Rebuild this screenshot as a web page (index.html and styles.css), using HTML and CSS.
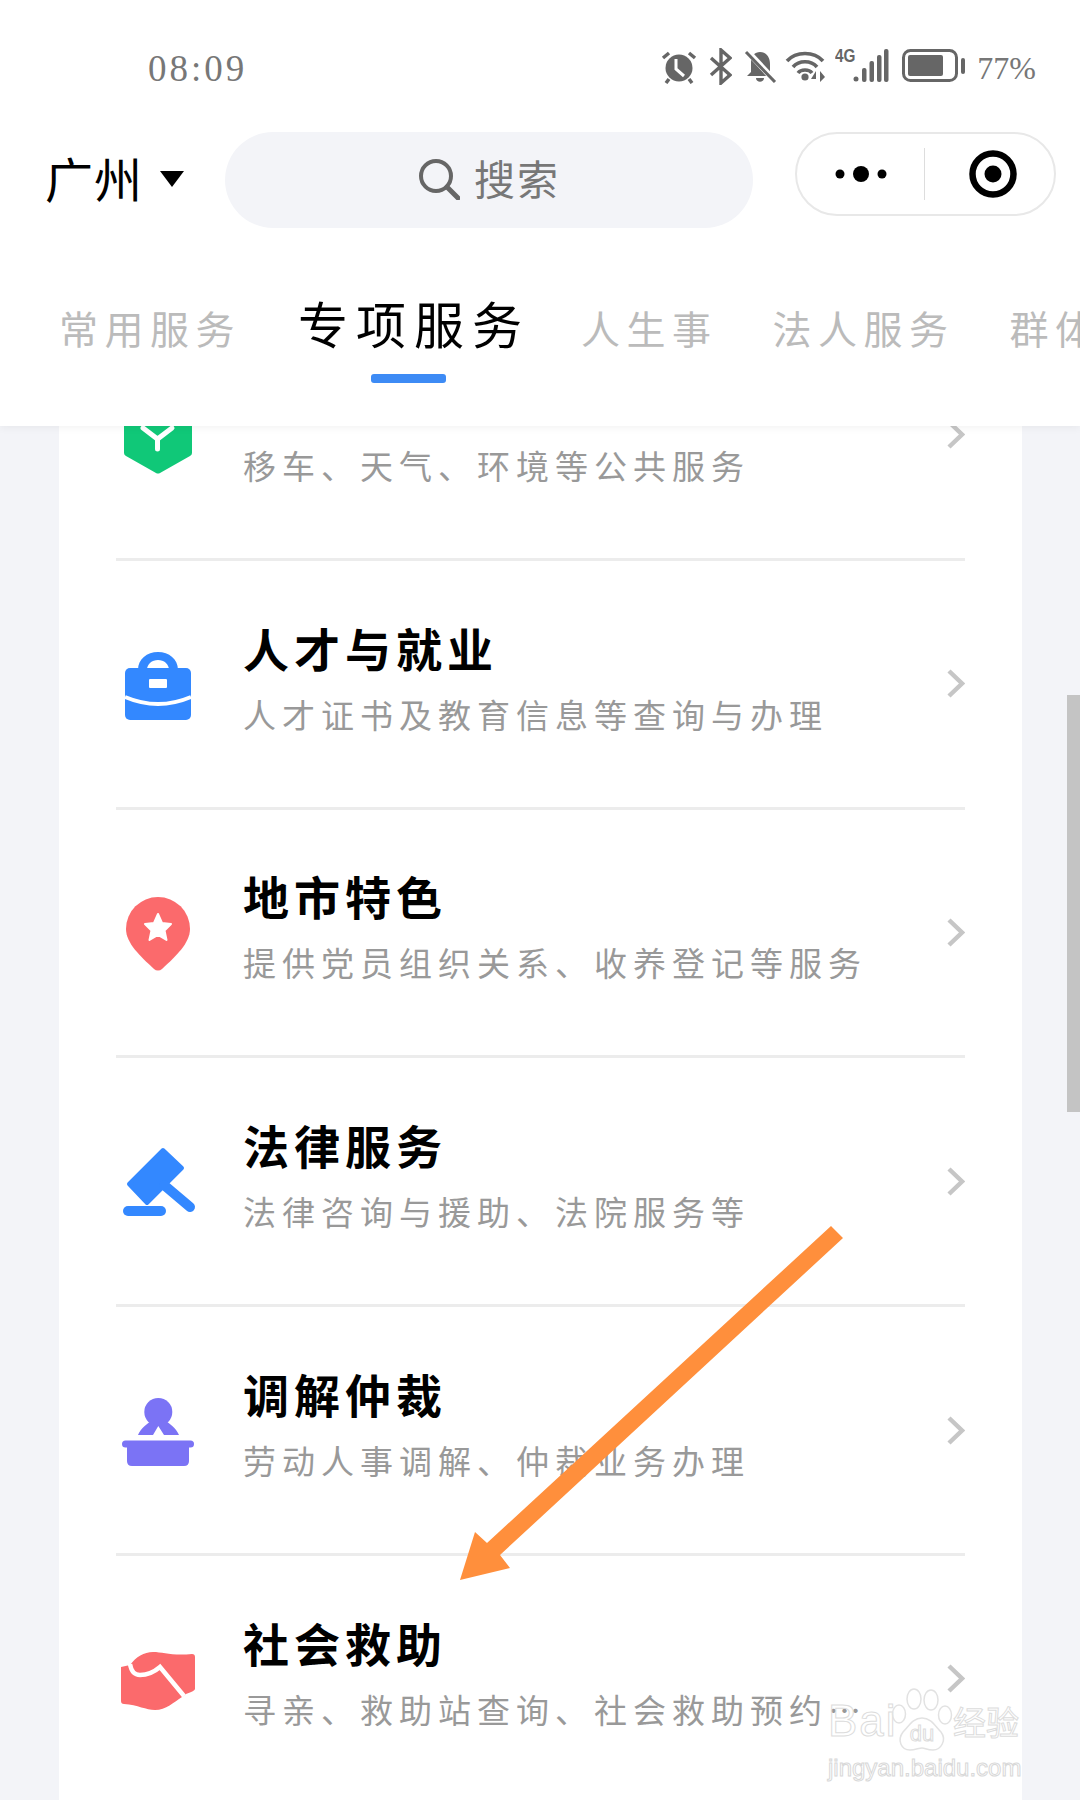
FILE: index.html
```html
<!DOCTYPE html>
<html lang="zh-CN">
<head>
    <meta charset="UTF-8">
    <meta name="viewport" content="width=device-width, initial-scale=1.0">
    <title>专项服务</title>
    <link rel="stylesheet" href="styles.css">
</head>
<body>
    <div class="page">
        <header class="header">
            <div class="status-bar">
                <span class="time">08:09</span>
                <div class="status-icons">
                    <svg class="st-alarm" width="36" height="34" viewBox="0 0 36 34">
                        <circle cx="18" cy="18" r="13.5" fill="#666"/>
                        <path d="M2 8L8 3M34 8L28 3M8 29L5 33M28 29L31 33" stroke="#666" stroke-width="3.5" fill="none"/>
                        <path d="M15 9V19L23 26" stroke="#fff" stroke-width="3" fill="none"/>
                    </svg>
                    <svg class="st-bt" width="23" height="37" viewBox="0 0 23 37">
                        <path d="M2 10L21 27L12 35V2L21 10L2 27" stroke="#666" stroke-width="3.4" fill="none"/>
                    </svg>
                    <svg class="st-bell" width="33" height="34" viewBox="0 0 33 34">
                        <path d="M16 3C23 3 26 9 26 15V23L29 27H3L7 23V13C7 7 11 3 16 3Z" fill="#666"/>
                        <path d="M12 29H20C20 34 12 34 12 29Z" fill="#666"/>
                        <path d="M3 2L31 32" stroke="#fff" stroke-width="6"/>
                        <path d="M2 3L31 33" stroke="#666" stroke-width="3"/>
                    </svg>
                    <svg class="st-wifi" width="40" height="34" viewBox="0 0 40 34">
                        <path d="M2 12C11 2 29 2 38 12M8 18C14 11 26 11 32 18M13 24C16 20 24 20 27 24" stroke="#666" stroke-width="3.6" fill="none"/>
                        <circle cx="20" cy="28" r="3.6" fill="#666"/>
                        <path d="M31 33V22L26 30H31M35 22V33L40 28Z" fill="#666"/>
                    </svg>
                    <div class="st-net">
                        <span class="net-label">4G</span>
                        <svg width="36" height="33" viewBox="0 0 36 33">
                            <circle cx="3" cy="30" r="2.5" fill="#666"/>
                            <rect x="9" y="19" width="4.5" height="14" rx="2" fill="#666"/>
                            <rect x="16.5" y="12" width="4.5" height="21" rx="2" fill="#666"/>
                            <rect x="24" y="6" width="4.5" height="27" rx="2" fill="#666"/>
                            <rect x="31" y="0" width="4.5" height="33" rx="2" fill="#666"/>
                        </svg>
                    </div>
                    <svg class="st-battery" width="63" height="34" viewBox="0 0 63 34">
                        <rect x="1.5" y="1.5" width="53" height="30" rx="7" stroke="#666" stroke-width="3" fill="none"/>
                        <rect x="6" y="6" width="35" height="21" rx="2" fill="#666"/>
                        <rect x="59" y="9" width="4" height="16" rx="2" fill="#666"/>
                    </svg>
                    <span class="battery-text">77%</span>
                </div>
            </div>

            <div class="nav-bar">
                <div class="city">
                    <span class="city-name">广州</span>
                    <i class="city-arrow"></i>
                </div>
                <div class="search">
                    <svg class="search-icon" width="42" height="42" viewBox="0 0 42 42">
                        <circle cx="18" cy="18" r="15" stroke="#666" stroke-width="4" fill="none"/>
                        <path d="M29 29L40 40" stroke="#666" stroke-width="5" stroke-linecap="round"/>
                    </svg>
                    <span class="search-label">搜索</span>
                </div>
                <div class="capsule">
                    <div class="capsule-dots">
                        <svg width="54" height="18" viewBox="0 0 54 18">
                            <circle cx="6" cy="9" r="4.5"/>
                            <circle cx="27" cy="9" r="8"/>
                            <circle cx="48" cy="9" r="4.5"/>
                        </svg>
                    </div>
                    <div class="capsule-line"></div>
                    <div class="capsule-target">
                        <svg width="48" height="48" viewBox="0 0 48 48">
                            <circle cx="24" cy="24" r="20.5" stroke="#000" stroke-width="6.5" fill="none"/>
                            <circle cx="24" cy="24" r="8.5"/>
                        </svg>
                    </div>
                </div>
            </div>

            <nav class="tabs">
                <div class="tab">常用服务</div>
                <div class="tab tab-active">专项服务</div>
                <div class="tab">人生事</div>
                <div class="tab">法人服务</div>
                <div class="tab">群体服务</div>
            </nav>
        </header>

        <main class="card">
            <div class="row">
                <svg class="row-icon" width="84" height="84" viewBox="0 0 84 84">
                    <path d="M42 4L76 22V60Q76 62 74 63L44 80Q42 81 40 80L10 63Q8 62 8 60V22Z" fill="#10c878"/>
                    <path d="M27 35L41.5 46L56 35M41.5 46V56" stroke="#fff" stroke-width="5" stroke-linecap="round" fill="none"/>
                </svg>
                <div class="row-text">
                    <div class="row-title">&nbsp;</div>
                    <div class="row-sub">移车、天气、环境等公共服务</div>
                </div>
                <svg class="chevron" width="18" height="29" viewBox="0 0 18 29"><path d="M2 2L15 14.5L2 27" stroke="#c6c6c6" stroke-width="4.5" fill="none"/></svg>
            </div>

            <div class="row">
                <svg class="row-icon" width="84" height="84" viewBox="0 0 84 84">
                    <path d="M22 28C22 17 31 10 42 10C53 10 62 17 62 28H53C53 22 48 18 42 18C36 18 31 22 31 28Z" fill="#3388ff"/>
                    <rect x="9" y="26" width="66" height="52" rx="5" fill="#3388ff"/>
                    <rect x="33" y="37" width="18" height="9" rx="1" fill="#fff"/>
                    <path d="M9 55Q42 69 75 55" stroke="#fff" stroke-width="4" fill="none"/>
                </svg>
                <div class="row-text">
                    <div class="row-title">人才与就业</div>
                    <div class="row-sub">人才证书及教育信息等查询与办理</div>
                </div>
                <svg class="chevron" width="18" height="29" viewBox="0 0 18 29"><path d="M2 2L15 14.5L2 27" stroke="#c6c6c6" stroke-width="4.5" fill="none"/></svg>
            </div>

            <div class="row">
                <svg class="row-icon" width="84" height="84" viewBox="0 0 84 84">
                    <path d="M42 7A32 32 0 0 1 74 39C74 53 60 66 46 79A6 6 0 0 1 38 79C24 66 10 53 10 39A32 32 0 0 1 42 7Z" fill="#fb6a6c"/>
                    <path d="M42 24L46 33L55 34L48.5 40.5L50.5 50L42 45L33.5 50L35.5 40.5L29 34L38 33Z" fill="#fff" stroke="#fff" stroke-width="2" stroke-linejoin="round"/>
                </svg>
                <div class="row-text">
                    <div class="row-title">地市特色</div>
                    <div class="row-sub">提供党员组织关系、收养登记等服务</div>
                </div>
                <svg class="chevron" width="18" height="29" viewBox="0 0 18 29"><path d="M2 2L15 14.5L2 27" stroke="#c6c6c6" stroke-width="4.5" fill="none"/></svg>
            </div>

            <div class="row">
                <svg class="row-icon" width="84" height="84" viewBox="0 0 84 84">
                    <path d="M47 11L66 29L31 64L13 45Z" fill="#3388ff" stroke="#3388ff" stroke-width="4" stroke-linejoin="round"/>
                    <path d="M48 46L74 68" stroke="#3388ff" stroke-width="10" stroke-linecap="round"/>
                    <rect x="7" y="67" width="43" height="10" rx="5" fill="#3388ff"/>
                </svg>
                <div class="row-text">
                    <div class="row-title">法律服务</div>
                    <div class="row-sub">法律咨询与援助、法院服务等</div>
                </div>
                <svg class="chevron" width="18" height="29" viewBox="0 0 18 29"><path d="M2 2L15 14.5L2 27" stroke="#c6c6c6" stroke-width="4.5" fill="none"/></svg>
            </div>

            <div class="row">
                <svg class="row-icon" width="84" height="84" viewBox="0 0 84 84">
                    <circle cx="42.3" cy="24" r="14" fill="#7b73f5"/>
                    <path d="M22 47C25 40 31 36 35 33H50C54 36 60 40 63 47H48L42.3 38L37 47Z" fill="#7b73f5"/>
                    <rect x="6" y="52.5" width="72" height="7" rx="3.5" fill="#7b73f5"/>
                    <path d="M11 56H73V73Q73 78 68 78H16Q11 78 11 73Z" fill="#7b73f5"/>
                </svg>
                <div class="row-text">
                    <div class="row-title">调解仲裁</div>
                    <div class="row-sub">劳动人事调解、仲裁业务办理</div>
                </div>
                <svg class="chevron" width="18" height="29" viewBox="0 0 18 29"><path d="M2 2L15 14.5L2 27" stroke="#c6c6c6" stroke-width="4.5" fill="none"/></svg>
            </div>

            <div class="row">
                <svg class="row-icon" width="84" height="84" viewBox="0 0 84 84">
                    <path d="M5 30L14 28C20 20 28 15 37 15C47 15 56 19 76 17Q79 17 79 20V52Q79 54 70 57L66 60C58 65 50 73 39 73C30 73 22 68 8 67Q5 67 5 64Z" fill="#fb6a6c"/>
                    <path d="M14 27C15 33 18 38 24 38C31 38 37 36 44 30L68 59" stroke="#fff" stroke-width="4.5" fill="none"/>
                </svg>
                <div class="row-text">
                    <div class="row-title">社会救助</div>
                    <div class="row-sub">寻亲、救助站查询、社会救助预约…</div>
                </div>
                <svg class="chevron" width="18" height="29" viewBox="0 0 18 29"><path d="M2 2L15 14.5L2 27" stroke="#c6c6c6" stroke-width="4.5" fill="none"/></svg>
            </div>
        </main>

        <div class="scrollbar"></div>

        <svg class="arrow" width="1080" height="1800" viewBox="0 0 1080 1800">
            <path d="M831 1226L843 1238L500 1555L510 1568L460 1580L475 1532L487 1543Z" fill="#ff8f3c"/>
        </svg>

        <div class="watermark">
            <div class="wm-logo">
                <span class="wm-bai">Bai</span>
                <svg class="wm-paw" width="62" height="64" viewBox="0 0 62 64">
                    <g fill="none" stroke="#e2e2e2" stroke-width="1.5">
                        <ellipse cx="8" cy="26" rx="6.5" ry="9"/>
                        <ellipse cx="23" cy="11" rx="7" ry="10"/>
                        <ellipse cx="40" cy="12" rx="7" ry="10"/>
                        <ellipse cx="54" cy="27" rx="6.5" ry="9"/>
                        <path d="M31 30C40 30 44 38 50 44C56 52 50 62 42 62C36 62 34 60 31 60C28 60 24 62 19 62C10 62 6 52 12 44C18 38 22 30 31 30Z"/>
                    </g>
                    <text x="31" y="53" class="wm-du">du</text>
                </svg>
                <span class="wm-jy">经验</span>
            </div>
            <div class="wm-url">jingyan.baidu.com</div>
        </div>
    </div>
</body>
</html>
```

FILE: styles.css
```css
body {
    margin: 0;
    font-family: "Noto Sans CJK SC", "Liberation Sans", sans-serif;
    background: #f3f4f8;
}
.page {
    position: relative;
    width: 1080px;
    height: 1800px;
    overflow: hidden;
}

/* top area */
.header {
    position: relative;
    z-index: 2;
    height: 426px;
    background: #fff;
    box-shadow: 0 2px 8px rgba(0, 0, 0, 0.05);
}
.status-bar {
    display: flex;
    justify-content: space-between;
    align-items: flex-start;
    height: 132px;
    padding: 49px 44px 0 148px;
    box-sizing: border-box;
}
.time {
    font-family: "Liberation Serif", serif;
    font-size: 37px;
    line-height: 40px;
    letter-spacing: 3px;
    color: #777;
}
.status-icons {
    display: flex;
    align-items: flex-start;
}
.status-icons svg {
    display: block;
}
.st-alarm { margin-top: 1px; }
.st-bt { margin-left: 12px; margin-top: -1px; }
.st-bell { margin-left: 12px; }
.st-wifi { margin-left: 8px; }
.st-net {
    display: flex;
    margin-left: 10px;
}
.net-label {
    font-family: "Liberation Sans", sans-serif;
    font-weight: bold;
    font-size: 18px;
    line-height: 14px;
    width: 18px;
    transform: scaleX(0.85);
    transform-origin: left;
    color: #666;
}
.st-battery { margin-left: 13px; }
.battery-text {
    margin-left: 12px;
    font-family: "Liberation Serif", serif;
    font-size: 32px;
    line-height: 38px;
    color: #777;
}

.nav-bar {
    display: flex;
    align-items: flex-start;
    height: 96px;
    padding-left: 45px;
}
.city {
    display: flex;
    align-items: center;
    width: 180px;
    height: 90px;
    font-size: 48px;
    letter-spacing: 1px;
    color: #000;
}
.city-arrow {
    margin-left: 17px;
    margin-top: 4px;
    border-left: 12px solid transparent;
    border-right: 12px solid transparent;
    border-top: 16px solid #000;
}
.search {
    display: flex;
    justify-content: center;
    align-items: center;
    gap: 14px;
    width: 528px;
    height: 96px;
    border-radius: 48px;
    background: #f3f4f8;
    font-size: 41px;
    letter-spacing: 2px;
    color: #777;
}
.search-icon {
    margin-top: -2px;
}
.search-label {
    margin-top: -6px;
}
.capsule {
    display: flex;
    align-items: center;
    margin-left: 42px;
    width: 261px;
    height: 84px;
    box-sizing: border-box;
    border: 2px solid #e8e8e8;
    border-radius: 42px;
}
.capsule-dots, .capsule-target {
    display: flex;
    justify-content: center;
}
.capsule-dots { width: 127px; }
.capsule-target { flex: 1; padding-left: 6px; }
.capsule-line {
    width: 1px;
    height: 52px;
    background: #ddd;
}

.tabs {
    display: flex;
    align-items: center;
    gap: 55px;
    height: 116px;
    padding: 0 0 0 59px;
    margin-top: 41px;
    overflow: hidden;
}
.tab {
    position: relative;
    flex-shrink: 0;
    font-size: 39px;
    letter-spacing: 6.5px;
    color: #bbb;
}
.tab-active {
    font-size: 50px;
    letter-spacing: 8px;
    color: #000;
    margin: -11px -4px 0 2px;
}
.tab-active::after {
    content: "";
    position: absolute;
    left: 73px;
    bottom: -25px;
    width: 75px;
    height: 9px;
    border-radius: 3px;
    background: #3d8bf5;
}

/* service list, scrolled so the first row sits under the header */
.card {
    margin: -114px 58px 0 59px;
    padding: 0 57px;
    background: #fff;
}
.row {
    display: flex;
    align-items: center;
    height: 248.8px;
    box-sizing: border-box;
    border-bottom: 3px solid #ececec;
}
.row-icon {
    flex-shrink: 0;
}
.row-text {
    flex: 1;
    margin-left: 43px;
    padding-bottom: 12px;
}
.row-title {
    font-size: 46px;
    line-height: 60px;
    font-weight: bold;
    letter-spacing: 5px;
    color: #000;
}
.row-sub {
    margin-top: 12px;
    font-size: 33px;
    line-height: 50px;
    letter-spacing: 6px;
    color: #999;
    white-space: nowrap;
}
.chevron {
    flex-shrink: 0;
}

.scrollbar {
    position: absolute;
    top: 695px;
    right: 0;
    width: 13px;
    height: 417px;
    background: #c4c4c4;
}
.arrow {
    position: absolute;
    top: 0;
    left: 0;
    z-index: 3;
}

/* image watermark */
.watermark {
    position: absolute;
    z-index: 3;
    left: 828px;
    top: 1688px;
    width: 194px;
}
.wm-logo {
    display: flex;
    align-items: flex-end;
}
.wm-bai {
    width: 69px;
    font-family: "Liberation Sans", sans-serif;
    font-size: 44px;
    line-height: 62px;
    color: transparent;
    -webkit-text-stroke: 1px #dcdcdc;
    letter-spacing: 2px;
}
.wm-paw {
    display: block;
    margin-left: -6px;
}
.wm-du {
    font-family: "Liberation Sans", sans-serif;
    font-size: 22px;
    text-anchor: middle;
    fill: none;
    stroke: #dcdcdc;
    stroke-width: 1;
}
.wm-jy {
    font-size: 33px;
    line-height: 62px;
    color: transparent;
    -webkit-text-stroke: 1px #dcdcdc;
}
.wm-url {
    font-family: "Liberation Sans", sans-serif;
    font-size: 24px;
    line-height: 30px;
    margin-top: 1px;
    color: transparent;
    -webkit-text-stroke: 1px #d8d8d8;
    white-space: nowrap;
}
```
